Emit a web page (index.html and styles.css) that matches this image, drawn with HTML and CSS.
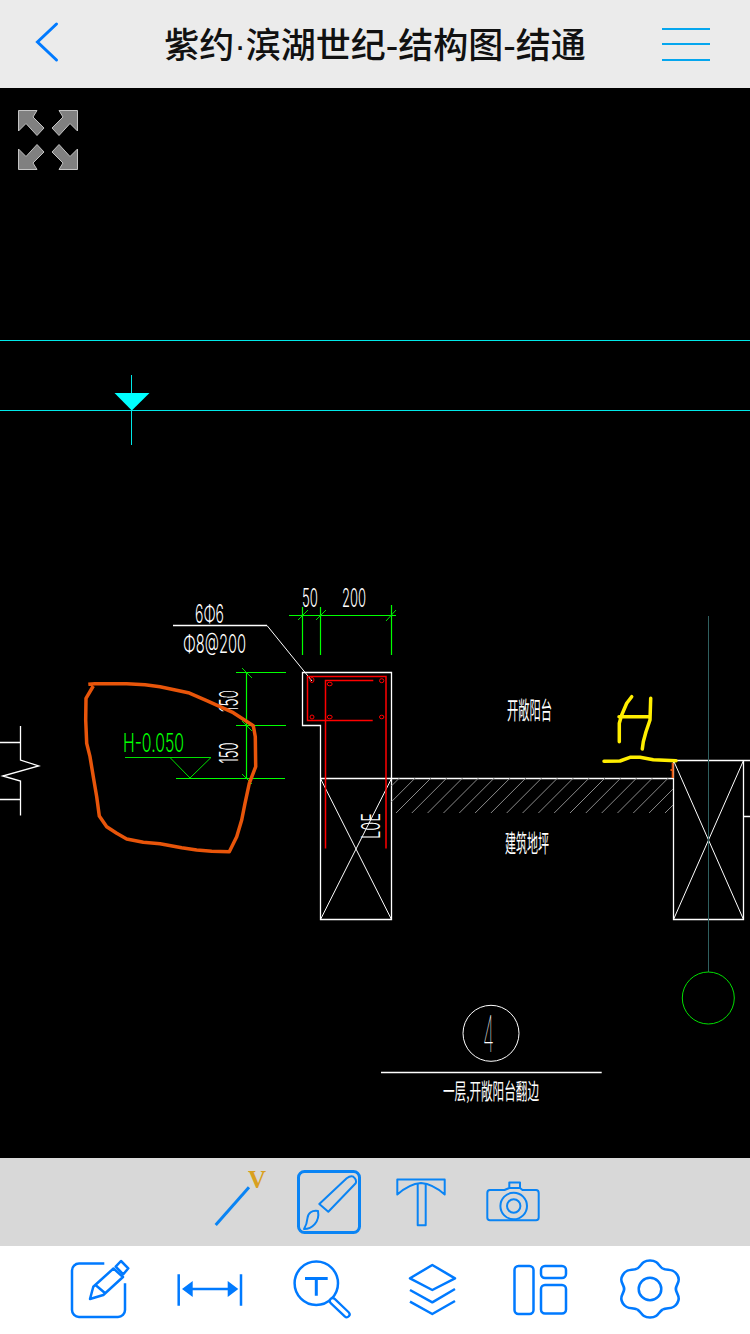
FILE: index.html
```html
<!DOCTYPE html>
<html lang="zh">
<head>
<meta charset="UTF-8">
<meta name="viewport" content="width=device-width, initial-scale=1.0">
<title>紫约·滨湖世纪-结构图-结通</title>
<link rel="stylesheet" href="styles.css">
</head>
<body>

<header class="topbar">
  <svg class="back" width="30" height="88" viewBox="30 0 30 88"><path class="chevron" d="M56.5 24 L37.500 42 L56.500 60"/></svg>
  <h1 class="title">紫约<span class="dot">·</span>滨湖世纪-结构图-结通</h1>
  <div class="menu"><span></span><span></span><span></span></div>
</header>

<main class="sheet">
  <!-- viewBox uses page coordinates, the sheet starts at y=88 -->
  <svg class="cad" width="750" height="1070" viewBox="0 88 750 1070">
    <!-- fullscreen arrows -->
    <g class="zoom-arrows">
      <path d="M18.500 110.500 H37 L33 117 L44 128 L37 135.500 L26 123.500 L18.500 131 Z"/>
      <path d="M77.500 110.500 H59 L63 117 L52 128 L59 135.500 L70 123.500 L77.500 131 Z"/>
      <path d="M18.500 169.500 H37 L33 163 L44 152 L37 144.500 L26 156.500 L18.500 149 Z"/>
      <path d="M77.500 169.500 H59 L63 163 L52 152 L59 144.500 L70 156.500 L77.500 149 Z"/>
    </g>

    <!-- level lines -->
    <g class="ln-cyan">
      <path d="M0 340.500 H750 M0 410.500 H750 M131.500 375 V445"/>
    </g>
    <path class="fill-cyan" d="M114.500 393 H149.500 L131.800 410.500 Z"/>

    <!-- left break line -->
    <path class="ln-white" d="M0 742.500 H20.500 M0 799.500 H20.500 M20.500 726 V760 L38.700 766 L2.700 776 L20.500 781 V815.500"/>

    <!-- section outline -->
    <path class="ln-white" d="M302.500 672.500 H391.500 V919.500 H320.500 V725.500 H302.500 Z"/>
    <path class="ln-thin" d="M320.500 778.500 L391.500 919.500 M391.500 778.500 L320.500 919.500"/>
    <path class="ln-white" d="M320.500 778.500 H673.500"/>
    <path class="ln-white" d="M673.500 778.500 V919.500 H743.500 V760.500 H673.500 V778.500 M743.500 760.500 H750 M743.500 816.500 H750"/>
    <path class="ln-thin" d="M673.500 760.500 L743.500 919.500 M743.500 760.500 L673.500 919.500"/>

    <!-- hatch -->
    <path class="ln-hatch" d="M391.500 785.900 L399.400 778 M391.500 801.700 L415.200 778 M396 813 L431 778 M411.800 813 L446.800 778 M427.600 813 L462.600 778 M443.500 813 L478.500 778 M459.300 813 L494.300 778 M475.100 813 L510.100 778 M490.900 813 L525.900 778 M506.700 813 L541.700 778 M522.600 813 L557.600 778 M538.400 813 L573.400 778 M554.200 813 L589.200 778 M570 813 L605 778 M585.800 813 L620.800 778 M601.700 813 L636.700 778 M617.500 813 L652.500 778 M633.300 813 L668.300 778 M649.100 813 L673 789 M665 813 L673 805"/>

    <!-- leader -->
    <path class="ln-white" d="M173 625.500 H267"/>
    <path class="ln-thin" d="M267 625.500 L312 681"/>
    <text class="cad-text" x="195" y="623" textLength="29" lengthAdjust="spacingAndGlyphs">6Φ6</text>
    <text class="cad-text" x="183" y="653" textLength="63" lengthAdjust="spacingAndGlyphs">Φ8@200</text>

    <!-- dimensions -->
    <path class="ln-green" d="M289 615.500 H396 M302.500 607 V655 M320.500 607 V655 M391.500 605 V655"/>
    <path class="ln-green-thin" d="M298 620 L308 610 M316 620 L326 610 M386 621 L396 610"/>
    <path class="ln-green" d="M236 672.500 H286 M236 725.500 H286 M176 778.500 H285 M246.500 672 V778"/>
    <path class="ln-green-thin" d="M242 668 L252 678 M242 721 L252 731 M242 774 L252 784"/>
    <text class="cad-text" x="302" y="607" textLength="16" lengthAdjust="spacingAndGlyphs">50</text>
    <text class="cad-text" x="342" y="607" textLength="24" lengthAdjust="spacingAndGlyphs">200</text>
    <text class="cad-text" transform="translate(238 712) rotate(-90)" textLength="22" lengthAdjust="spacingAndGlyphs">150</text>
    <text class="cad-text" transform="translate(238 763.500) rotate(-90)" textLength="21" lengthAdjust="spacingAndGlyphs">150</text>

    <!-- level mark -->
    <path class="ln-green-thin" d="M125 757.500 H211 L190 778 L170 757.500"/>
    <text class="cad-text green" x="123" y="752" textLength="61" lengthAdjust="spacingAndGlyphs">H-0.050</text>

    <!-- rebar -->
    <path class="ln-red" d="M372.700 720.500 H307.500 V676.500 H386 V848.500 M373.300 680.500 H325.500 V848.500"/>
    <g class="ln-red-thin">
      <ellipse cx="312" cy="680" rx="2" ry="2.500"/>
      <ellipse cx="329.700" cy="684" rx="2.500" ry="1.800"/>
      <ellipse cx="381.700" cy="680.700" rx="2.200" ry="2"/>
      <ellipse cx="312" cy="717" rx="2" ry="2"/>
      <ellipse cx="329.700" cy="717" rx="2.500" ry="1.800"/>
      <ellipse cx="381.700" cy="717" rx="2.200" ry="1.800"/>
    </g>
    <text class="cad-text" transform="translate(380 839) rotate(-90)" textLength="26" lengthAdjust="spacingAndGlyphs">L0E</text>

    <!-- labels -->
    <text class="cad-cjk" x="507" y="719" textLength="45" lengthAdjust="spacingAndGlyphs">开敞阳台</text>
    <text class="cad-cjk" x="505" y="852" textLength="44" lengthAdjust="spacingAndGlyphs">建筑地坪</text>

    <!-- axis -->
    <path class="ln-axis" d="M708.500 616 V972"/>
    <circle class="ln-green-thin" cx="708.300" cy="998" r="26"/>

    <!-- section title -->
    <circle class="ln-thin" cx="491" cy="1033.300" r="28"/>
    <text class="cad-text big" x="483" y="1052" textLength="11" lengthAdjust="spacingAndGlyphs">4</text>
    <path class="ln-white" d="M381 1072.500 H601.700"/>
    <text class="cad-cjk small" x="443" y="1099" textLength="96" lengthAdjust="spacingAndGlyphs">一层,开敞阳台翻边</text>

    <!-- hand drawn markup -->
    <path class="mark-orange" d="M88.300 684.300 L95 683.700 L126.700 683.700 L145 684.700 L160 686.700 L188.300 692.700 L206.700 700.700 L220 706.700 L233.300 712.700 L253.300 725.700 L255.300 736.700 L255.700 766.700 L249.300 783.300 L245 803.300 L241.700 820 L236.700 836.700 L229.300 851.700 L211.700 851.300 L196.700 850 L181.700 847.700 L160 843.700 L143.300 842.300 L126.700 839 L116.700 833.300 L106.700 826.700 L99.300 816 L96.700 796.700 L93.300 776.700 L90 756.700 L86.700 743.300 L85.700 720 L86 698.300 L93.300 686"/>
    <path class="mark-orange thin" d="M672.700 763 V778 M670.500 770 H672"/>
    <path class="mark-yellow" d="M631.700 696.700 L626.700 703.300 L621.700 715 L619.300 723.300 L619.300 741.700 M650.700 698.300 L650 720 L646 731.700 L643.300 741.700 L642.300 749 M619 716.700 H650 M604 761.300 L620 761 L630 757.300 L640 757.300 L653.300 759.700 L676 760.700"/>
  </svg>
</main>

<section class="toolbar">
  <button class="tool">
    <svg width="72" height="88" viewBox="204 1158 72 88">
      <path class="ico ico-fat" d="M215.700 1225 L249 1187.300"/>
      <text class="line-v" x="248" y="1188">V</text>
    </svg>
  </button>
  <button class="tool">
    <svg width="72" height="88" viewBox="295 1158 72 88">
      <rect class="ico ico-fat" x="298.500" y="1171.500" width="61" height="61" rx="6"/>
      <path class="ico" d="M319.300 1204 L346.700 1178.300 Q350.500 1175.500 353.300 1176.700 Q357 1179.500 355.700 1183.300 L328.300 1211.700 Z"/>
      <path class="ico" d="M318 1211 C312 1210 308 1213 307.500 1218 C307 1223 306 1226 304 1229 C312 1229 320 1222 318 1211 Z"/>
    </svg>
  </button>
  <button class="tool">
    <svg width="72" height="88" viewBox="386 1158 72 88">
      <path class="ico" d="M397.300 1194.500 V1179.500 H444.700 V1194.500 Q433 1184 421 1183 Q409 1184 397.300 1194.500 Z"/>
      <path class="ico" d="M417.700 1183 V1225.300 H425.700 V1183"/>
    </svg>
  </button>
  <button class="tool">
    <svg width="72" height="88" viewBox="477 1158 72 88">
      <path class="ico" d="M490 1190 H504.500 L509.300 1188 V1182.500 H520 V1188 L522.500 1190 H536 Q538.700 1190 538.700 1193 V1217.500 Q538.700 1220.300 536 1220.300 H490 Q487.300 1220.300 487.300 1217.500 V1193 Q487.300 1190 490 1190 Z"/>
      <path class="ico" d="M509.300 1188 H520"/>
      <circle class="ico ico-fill" cx="513.700" cy="1206" r="13.300"/>
      <circle class="ico" cx="513.700" cy="1206" r="6.700"/>
    </svg>
  </button>
</section>

<nav class="bottombar">
  <button class="tool wide">
    <svg width="80" height="88" viewBox="58 1246 80 88">
      <path class="ico ico-fat" d="M104.300 1263.500 H79 A7 7 0 0 0 72 1270.500 V1310 A7 7 0 0 0 79 1317 H118 A7 7 0 0 0 125 1310 V1283.300"/>
      <path class="ico" d="M90 1299 L93.300 1286.700 L113.500 1268.500 L123 1277 L103.300 1295 Z M95.500 1285 L105.500 1293.500"/>
      <path class="ico" d="M115.700 1266.700 L121 1261 L128.300 1268.300 L123.300 1274.300 Z"/>
    </svg>
  </button>
  <button class="tool wide">
    <svg width="80" height="88" viewBox="168 1246 80 88">
      <path class="ico ico-fat" d="M178.700 1274.300 V1305.700 M241 1274.300 V1305.700 M190 1289 H230"/>
      <path class="ico-solid" d="M182 1289 L192.700 1281 V1297 Z M238.300 1289 L227.700 1281 V1297 Z"/>
    </svg>
  </button>
  <button class="tool wide">
    <svg width="80" height="88" viewBox="278 1246 80 88">
      <circle class="ico ico-fat" cx="316.300" cy="1283.300" r="21.700"/>
      <path class="ico ico-t" d="M305 1278.500 H327.700 M316.300 1278.500 V1295.700"/>
      <path class="handle-out" d="M332.700 1301 L346.700 1314.300"/>
      <path class="handle-in" d="M332.700 1301 L346.700 1314.300"/>
    </svg>
  </button>
  <button class="tool wide">
    <svg width="80" height="88" viewBox="388 1246 80 88">
      <path class="ico ico-fat" d="M410 1278.300 L432.300 1265 L455 1278.300 L432.300 1290 Z"/>
      <path class="ico ico-fat" d="M410 1290 L432.300 1302.300 L455 1289 M410 1301.700 L432.300 1314 L455 1301"/>
    </svg>
  </button>
  <button class="tool wide">
    <svg width="80" height="88" viewBox="498 1246 80 88">
      <rect class="ico ico-fat" x="514.500" y="1266" width="19" height="48" rx="4"/>
      <rect class="ico ico-fat" x="541" y="1266" width="25" height="12" rx="4"/>
      <rect class="ico ico-fat" x="541" y="1285" width="25" height="28.500" rx="4"/>
    </svg>
  </button>
  <button class="tool wide">
    <svg width="80" height="88" viewBox="608 1246 80 88">
      <g transform="translate(650 1289)">
        <g transform="scale(1.1 1)">
          <path id="lobe" class="ico ico-fat" d="M-11.750 -20.350 C-7.400 -22.850 -8 -28.500 0 -28.500 C8 -28.500 7.400 -22.850 11.750 -20.350"/>
          <use href="#lobe" transform="rotate(60)"/>
          <use href="#lobe" transform="rotate(120)"/>
          <use href="#lobe" transform="rotate(180)"/>
          <use href="#lobe" transform="rotate(240)"/>
          <use href="#lobe" transform="rotate(300)"/>
        </g>
        <circle class="ico ico-fat" r="11.300"/>
      </g>
    </svg>
  </button>
</nav>

</body>
</html>
```

FILE: styles.css
```css
* { box-sizing: border-box; }
html, body { margin: 0; padding: 0; }
body { width: 750px; height: 1334px; overflow: hidden; background: #000; font-family: "Noto Sans CJK SC", "Noto Sans", sans-serif; }
svg { display: block; }

/* top bar */
.topbar { height: 88px; background: #ebebeb; display: flex; align-items: center; padding: 0 40px 0 30px; }
.chevron { fill: none; stroke: #007aff; stroke-width: 3; stroke-linecap: round; stroke-linejoin: miter; }
.title { flex: 1; margin: 0; text-align: center; font-size: 35px; font-weight: 500; line-height: 84px; color: #111; padding-left: 28px; white-space: nowrap; }
.dot { font-family: "Liberation Sans", sans-serif; }
.menu { width: 48px; display: flex; flex-direction: column; gap: 13.500px; }
.menu span { display: block; height: 2px; background: #05a6ee; }

/* drawing */
.sheet { height: 1070px; background: #000; }
.zoom-arrows path { fill: #808080; stroke: #c4c4c4; stroke-width: 1; }

.ln-cyan path, .ln-cyan { fill: none; stroke: #00e8e8; stroke-width: 1; shape-rendering: crispEdges; }
.fill-cyan { fill: #00ffff; }
.ln-white { fill: none; stroke: #fff; stroke-width: 1.300; }
.ln-thin { fill: none; stroke: #fff; stroke-width: 1; }
.ln-hatch { fill: none; stroke: #8a8a8a; stroke-width: 1; }
.ln-green { fill: none; stroke: #00ff00; stroke-width: 1.200; }
.ln-green-thin { fill: none; stroke: #00e000; stroke-width: 1; }
.ln-red { fill: none; stroke: #ff0000; stroke-width: 1.500; }
.ln-red-thin { fill: none; stroke: #ff0000; stroke-width: 1; }
.ln-axis { fill: none; stroke: #2f5f5f; stroke-width: 1; shape-rendering: crispEdges; }

.cad-text { font-family: Inter, "Liberation Sans", sans-serif; font-weight: 300; font-size: 25px; fill: #fff; }
.cad-text.green { fill: #00ff00; }
.cad-text.big { font-size: 51px; font-weight: 100; }
.cad-cjk { font-family: "Noto Sans CJK SC", sans-serif; font-weight: 400; font-size: 24px; fill: #fff; }
.cad-cjk.small { font-size: 22px; }

.mark-orange { fill: none; stroke: #e8550a; stroke-width: 3.500; stroke-linejoin: round; }
.mark-orange.thin { stroke-width: 2; }
.mark-yellow { fill: none; stroke: #ffee00; stroke-width: 3.500; stroke-linecap: round; stroke-linejoin: round; }

/* tool rows */
.toolbar { height: 88px; background: #d8d8d8; display: flex; gap: 19px; padding-left: 204px; }
.bottombar { height: 88px; background: #fff; display: flex; gap: 30px; padding-left: 58px; }
.tool { width: 72px; height: 88px; padding: 0; margin: 0; border: none; background: none; }
.tool.wide { width: 80px; }

.ico { fill: none; stroke: #0a84f4; stroke-width: 2; stroke-linejoin: round; }
.ico-fat { stroke-width: 3; }
.ico-t { stroke-width: 3; }
.ico-solid { fill: #0a84f4; }
.bottombar .ico { stroke: #007aff; stroke-width: 2.500; }
.bottombar .ico-t { stroke-width: 3; }
.bottombar .ico-solid { fill: #007aff; }
.handle-out { fill: none; stroke: #007aff; stroke-width: 8; stroke-linecap: round; }
.handle-in { fill: none; stroke: #fff; stroke-width: 3.500; stroke-linecap: round; }
.line-v { font-family: "Liberation Serif", serif; font-weight: 700; font-size: 25px; fill: #d9a020; }
```
